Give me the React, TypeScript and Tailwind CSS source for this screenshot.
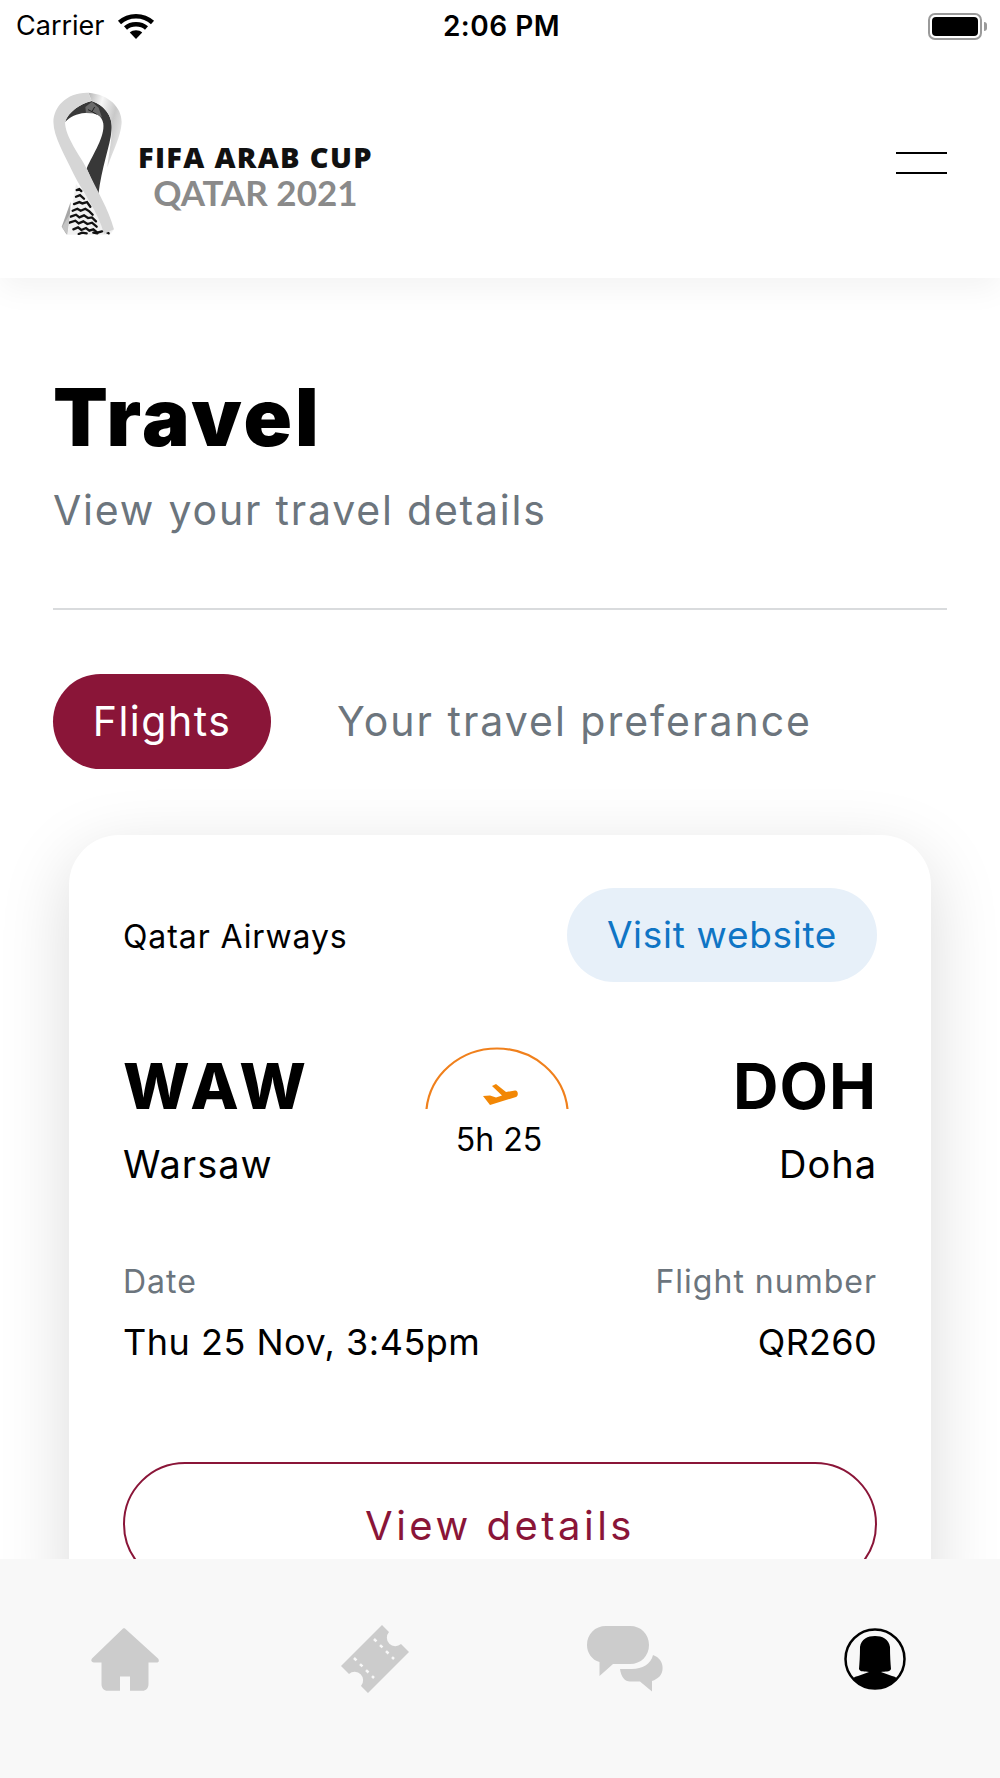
const Wifi = () => (
  <svg width="38" height="27" viewBox="1 1 36 27" fill="none" stroke="#000">
    <path d="M2.500 10.500C11.500 2 26.500 2 35.500 10.500" strokeWidth="4.500" />
    <path d="M8.500 16C14 11 24 11 29.500 16" strokeWidth="4.500" />
    <path d="M19 27L12.800 20.500C16 17.600 22 17.600 25.200 20.500Z" fill="#000" stroke="none" />
  </svg>
);

const Battery = () => (
  <div className="flex items-center">
    <div className="w-[54px] h-[27px] rounded-[7px] border-2 border-[#9a9a9a] p-[2px]">
      <div className="w-full h-full rounded-[4px] bg-black" />
    </div>
    <div className="w-[3px] h-[9px] ml-[2px] rounded-r-full bg-[#9a9a9a]" />
  </div>
);

const Ribbon = () => (
  <svg width="69" height="143" viewBox="70 35 205 430" className="shrink-0">
    <defs>
      <linearGradient id="rim" x1="0" y1="0" x2="1" y2="0.6">
        <stop offset="0" stopColor="#b5b5b5" />
        <stop offset="0.35" stopColor="#f6f6f6" />
        <stop offset="0.7" stopColor="#c9c9c9" />
        <stop offset="1" stopColor="#e6e6e6" />
      </linearGradient>
    </defs>
    {/* pattern wedge */}
    <path d="M138 312L252 448L240 464L112 464L122 400Z" fill="#f1f1f1" />
    <g fill="none" stroke="#111" strokeWidth="7" strokeLinecap="round">
      <path d="M140 330l8-3l6 6" />
      <path d="M138 350l12-5l12 11" />
      <path d="M132 372l16-6l9 4l14-4l10 14" />
      <path d="M128 392l14-6l10 6l14-6l12 8l10 10" />
      <path d="M122 410l16-6l10 8l14-6l12 8l12-2l12 12" />
      <path d="M118 428l18-6l10 8l14-6l12 8l14-4l14 12" />
      <path d="M130 448l14-6l10 8l14-6l10 8l12-4l12 10l14-4" />
      <path d="M146 462l10-4l14 2M190 458l12 2M222 452l14 8" />
    </g>
    {/* dark inner band */}
    <path d="M105 125C115 95 150 70 185 62C225 75 250 110 245 150C240 200 215 260 205 345L170 265C190 220 225 170 220 130C215 100 190 95 165 98C140 100 120 110 105 125Z" fill="#383838" />
    <path d="M166 80L186 64L206 82L216 112L196 100L168 98Z" fill="#6a6a6a" />
    <path d="M174 88l12 6l8-14M186 94l14 8" fill="none" stroke="#222" strokeWidth="3" />
    {/* right rim */}
    <path d="M175 37C240 42 278 85 275 130C272 170 250 210 232 262C240 200 245 180 245 150C250 110 225 75 185 62Z" fill="url(#rim)" />
    {/* main light band */}
    <path d="M175 37C110 35 70 80 70 125C70 170 105 225 130 280C160 340 205 395 222 462L252 448C235 385 200 330 170 265C150 225 105 170 105 125C115 95 150 70 185 62Z" fill="#d6d6d6" />
    <path d="M122 365L95 440L110 464L120 400Z" fill="#a6a6a6" />
    <path d="M120 400L112 464L96 442Z" fill="#c4c4c4" />
  </svg>
);

const Plane = () => (
  <svg width="35" height="21" viewBox="0 0 35 21" fill="#f28705">
    <path d="M0 12L7 11.500L13 13.500L19 11.500L9 2L13 0L23 8L32 6.500C35 6 36 11.500 33 13L7 21Z" />
  </svg>
);

const Arc = () => (
  <svg width="144" height="62" viewBox="0 0 144 62" fill="none">
    <path d="M1.500 62C5 28 35 1.500 72 1.500C109 1.500 139 28 142.500 62" stroke="#f0801c" strokeWidth="2.200" />
  </svg>
);

const Home = () => (
  <svg width="68" height="63" viewBox="0 0 68 63" fill="#cccccc">
    <path d="M34 0.500L67 30.500C68.500 32.500 68 34.500 65.500 34.500H57.500V56C57.500 60 55 62.800 51.500 62.800H39V48.500H29V62.800H16.500C13 62.800 10.500 60 10.500 56V34.500H3C0.500 34.500 -0.500 32.500 1 30.500L32 0.500C33 0 33.500 0 34 0.500Z" />
  </svg>
);

const Ticket = () => (
  <svg width="68" height="68" viewBox="0 0 68 68">
    <path d="M41 0L48 7A8.500 8.500 0 0 0 60 19L68 27L27 68L20 61A8.500 8.500 0 0 0 8 49L0 41Z" fill="#cccccc" />
    <path d="M33 14L53 34M13 33L33 53" stroke="#f8f8f8" strokeWidth="2.500" strokeDasharray="3.500 5" fill="none" />
  </svg>
);

const Chat = () => (
  <svg width="76" height="66" viewBox="0 0 76 66" fill="#cccccc">
    <path d="M19 0H43C54 0 62 8 62 19C62 30 54 38 43 38H26L12.500 50V36C5 34 0 27 0 19C0 8 8 0 19 0Z" />
    <path d="M66 29C72 31 75.600 36 75.600 42C75.600 49 71 53 65 55V65.500L53 55.500H43C38 55.500 34 51 33 43H45C55 43 64 38 66 29Z" />
  </svg>
);

const Avatar = () => (
  <svg width="62" height="62" viewBox="0 0 62 62">
    <circle cx="31" cy="31" r="29.500" fill="#f8f8f8" stroke="#000" strokeWidth="2.500" />
    <path d="M31 8C38 8 45 11 46 19C46 28 46.500 35 47 41C46 44 41 43.500 37 44L48 48C54 49 53 52 50 54C45 58 38 60.500 31 60.500C24 60.500 17 58 12 54C9 52 8 49 14 48L25 44C21 43.500 16 44 15 41C15.500 35 16 28 16 19C17 11 24 8 31 8Z" fill="#000" />
  </svg>
);

export default function App() {
  return (
    <div className="w-[1000px] h-[1778px] flex flex-col overflow-hidden bg-white font-['Inter',sans-serif] text-black">
      {/* Status bar + header */}
      <header className="h-[278px] shrink-0 bg-white relative z-10 shadow-[0_10px_30px_rgba(0,0,0,0.05)]">
        <div className="h-[52px] pl-[16px] pr-[13px] grid grid-cols-3 items-center text-[27px]">
          <div className="flex items-center gap-[12px]">
            <span>Carrier</span>
            <Wifi />
          </div>
          <span className="text-center font-semibold text-[28px] tracking-[0.500px]">2:06 PM</span>
          <div className="flex justify-end">
            <Battery />
          </div>
        </div>
        <div className="flex items-start justify-between pl-[53px] pr-[53px] pt-[40px]">
          <div className="flex items-start">
            <Ribbon />
            <div className="flex flex-col items-center ml-[16px] mt-[50px]">
              <span className="font-['Open_Sans',sans-serif] text-[29px] leading-[30px] font-extrabold tracking-[1.300px] text-[#111] whitespace-nowrap">FIFA ARAB CUP</span>
              <span className="mt-[2px] font-['Lato',sans-serif] text-[35px] leading-[36px] font-bold text-[#8a8a8a] whitespace-nowrap">QATAR 2021</span>
            </div>
          </div>
          <div className="flex flex-col gap-[18px] w-[51px] mt-[60px]">
            <div className="h-[2px] bg-black" />
            <div className="h-[2px] bg-black" />
          </div>
        </div>
      </header>

      <main className="flex-1 min-h-0 overflow-hidden px-[53px]">
        <h1 className="mt-[94px] text-[80px] leading-[90px] font-black tracking-[3px]">Travel</h1>
        <p className="mt-[20px] text-[41px] leading-[56px] tracking-[1.800px] text-[#6c757d]">View your travel details</p>
        <hr className="mt-[70px] border-t-2 border-[#d9dbdd]" />

        <nav className="mt-[64px] flex items-center gap-[66px] text-[41px] tracking-[1.500px]">
          <span className="w-[218px] h-[95px] rounded-full bg-[#8a1538] text-white flex items-center justify-center">Flights</span>
          <span className="text-[#6c757d] tracking-[2px]">Your travel preferance</span>
        </nav>

        <article className="mt-[66px] ml-[16px] w-[862px] rounded-[50px] bg-white px-[54px] pt-[53px] pb-[40px] shadow-[0_20px_70px_rgba(0,0,0,0.15)]">
          <div className="flex items-center justify-between">
            <span className="mt-[4px] text-[32px] tracking-[0.900px]">Qatar Airways</span>
            <span className="w-[310px] h-[94px] rounded-full bg-[#e7f0f9] text-[#0f75c5] text-[37px] tracking-[0.700px] flex items-center justify-center">Visit website</span>
          </div>

          <div className="mt-[66px] grid grid-cols-[1fr_auto_1fr] items-start">
            <div>
              <div className="text-[63px] leading-[76px] font-extrabold tracking-[5.500px]">WAW</div>
              <div className="mt-[15px] text-[38px] leading-[50px] tracking-[1px]">Warsaw</div>
            </div>
            <div className="flex flex-col items-center -mt-[1px] mr-[6px]">
              <div className="relative">
                <Arc />
                <div className="absolute left-[58px] top-[37px]">
                  <Plane />
                </div>
              </div>
              <span className="mt-[9px] ml-[4px] text-[32px] leading-[44px]">5h 25</span>
            </div>
            <div className="text-right">
              <div className="text-[63px] leading-[76px] font-bold tracking-[1px]">DOH</div>
              <div className="mt-[15px] text-[38px] leading-[50px] tracking-[1px]">Doha</div>
            </div>
          </div>

          <div className="mt-[71px] flex justify-between">
            <div>
              <div className="text-[32px] leading-[44px] tracking-[1px] text-[#6c757d]">Date</div>
              <div className="mt-[13px] text-[36px] leading-[50px] tracking-[0.500px]">Thu 25 Nov, 3:45pm</div>
            </div>
            <div className="text-right">
              <div className="text-[32px] leading-[44px] tracking-[1px] text-[#6c757d]">Flight number</div>
              <div className="mt-[13px] text-[36px] leading-[50px] tracking-[0.300px]">QR260</div>
            </div>
          </div>

          <button className="mt-[95px] w-full h-[124px] pt-[4px] rounded-full border-2 border-[#8a1538] text-[#8a1538] text-[40px] tracking-[3.500px]">
            View details
          </button>
        </article>
      </main>

      {/* Bottom tabs */}
      <footer className="h-[219px] shrink-0 relative z-10 bg-[#f8f8f8] grid grid-cols-4 pt-[66px]">
        <div className="h-[68px] flex justify-center items-center"><Home /></div>
        <div className="h-[68px] flex justify-center items-center"><Ticket /></div>
        <div className="h-[68px] flex justify-center items-center"><Chat /></div>
        <div className="h-[68px] flex justify-center items-center"><Avatar /></div>
      </footer>
    </div>
  );
}
